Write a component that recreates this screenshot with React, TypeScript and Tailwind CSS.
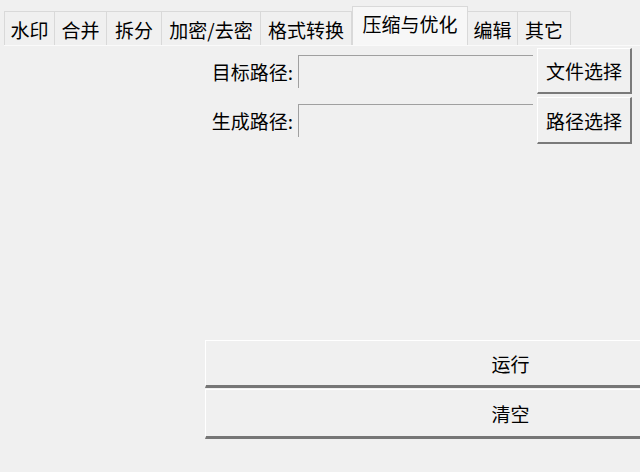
import React from 'react';

const font = { fontFamily: '"Noto Sans CJK SC", "Noto Sans", sans-serif' };

const tabs = [
  { label: '水印', w: 'w-[51px]' },
  { label: '合并', w: 'w-[52px]' },
  { label: '拆分', w: 'w-[55px]' },
  { label: '加密/去密', w: 'w-[99px]' },
  { label: '格式转换', w: 'w-[91px]' },
  { label: '压缩与优化', w: 'w-[116px]', active: true },
  { label: '编辑', w: 'w-[50px]' },
  { label: '其它', w: 'w-[53px]' },
];

const PathRow: React.FC<{ label: string; button: string; top: string; h: string }> = ({ label, button, top, h }) => (
  <div className={`flex items-center ${top} ${h}`}>
    <div className="w-[293px] text-right leading-none">{label}</div>
    <div className="ml-[5px] w-[235px] h-[33px] border-t border-l border-[#a0a0a0] bg-[#f0f0f0]" />
    <button className={`ml-[4px] w-[95px] ${h} flex items-center justify-center border-t border-l border-white border-r-2 border-b-2 border-r-[#7a7a7a] border-b-[#7a7a7a] bg-[#f0f0f0] leading-none`}>
      {button}
    </button>
  </div>
);

const App: React.FC = () => {
  return (
    <div className="w-[640px] h-[472px] overflow-hidden bg-[#f0f0f0] text-[19px] text-black flex flex-col" style={font}>
      {/* tab strip */}
      <div className="flex items-end h-[46px] pl-[4px] shrink-0">
        {tabs.map((t) =>
          t.active ? (
            <div
              key={t.label}
              className={`${t.w} h-[40px] flex justify-center pt-[6px] border border-b-0 border-[#d9d9d9] bg-[#f7f7f7] leading-none`}
            >
              <span className="mt-[1px]">{t.label}</span>
            </div>
          ) : (
            <div
              key={t.label}
              className={`${t.w} h-[35px] flex items-center justify-center border border-b-0 border-l-0 first:border-l border-[#d9d9d9] bg-[#f0f0f0] leading-none`}
            >
              <span className="mt-[1px]">{t.label}</span>
            </div>
          )
        )}
      </div>

      {/* panel */}
      <div className="flex-1 ml-[4px] -mt-[1px] border-t border-[#fafafa] flex flex-col">
        <div className="-ml-[4px]">
          <PathRow label="目标路径:" button="文件选择" top="mt-[2px]" h="h-[46px]" />
          <PathRow label="生成路径:" button="路径选择" top="mt-[3px]" h="h-[47px]" />
        </div>

        <div className="mt-[196px] ml-[201px] w-[610px] flex flex-col">
          <button className="h-[48px] flex items-center justify-center border-t border-l border-white border-b-[3px] border-b-[#767676] bg-[#f0f0f0] leading-none">
            运行
          </button>
          <button className="mt-[1px] h-[50px] flex items-center justify-center border-t border-l border-white border-b-[3px] border-b-[#767676] bg-[#f0f0f0] leading-none">
            清空
          </button>
        </div>
      </div>
    </div>
  );
};

export default App;
